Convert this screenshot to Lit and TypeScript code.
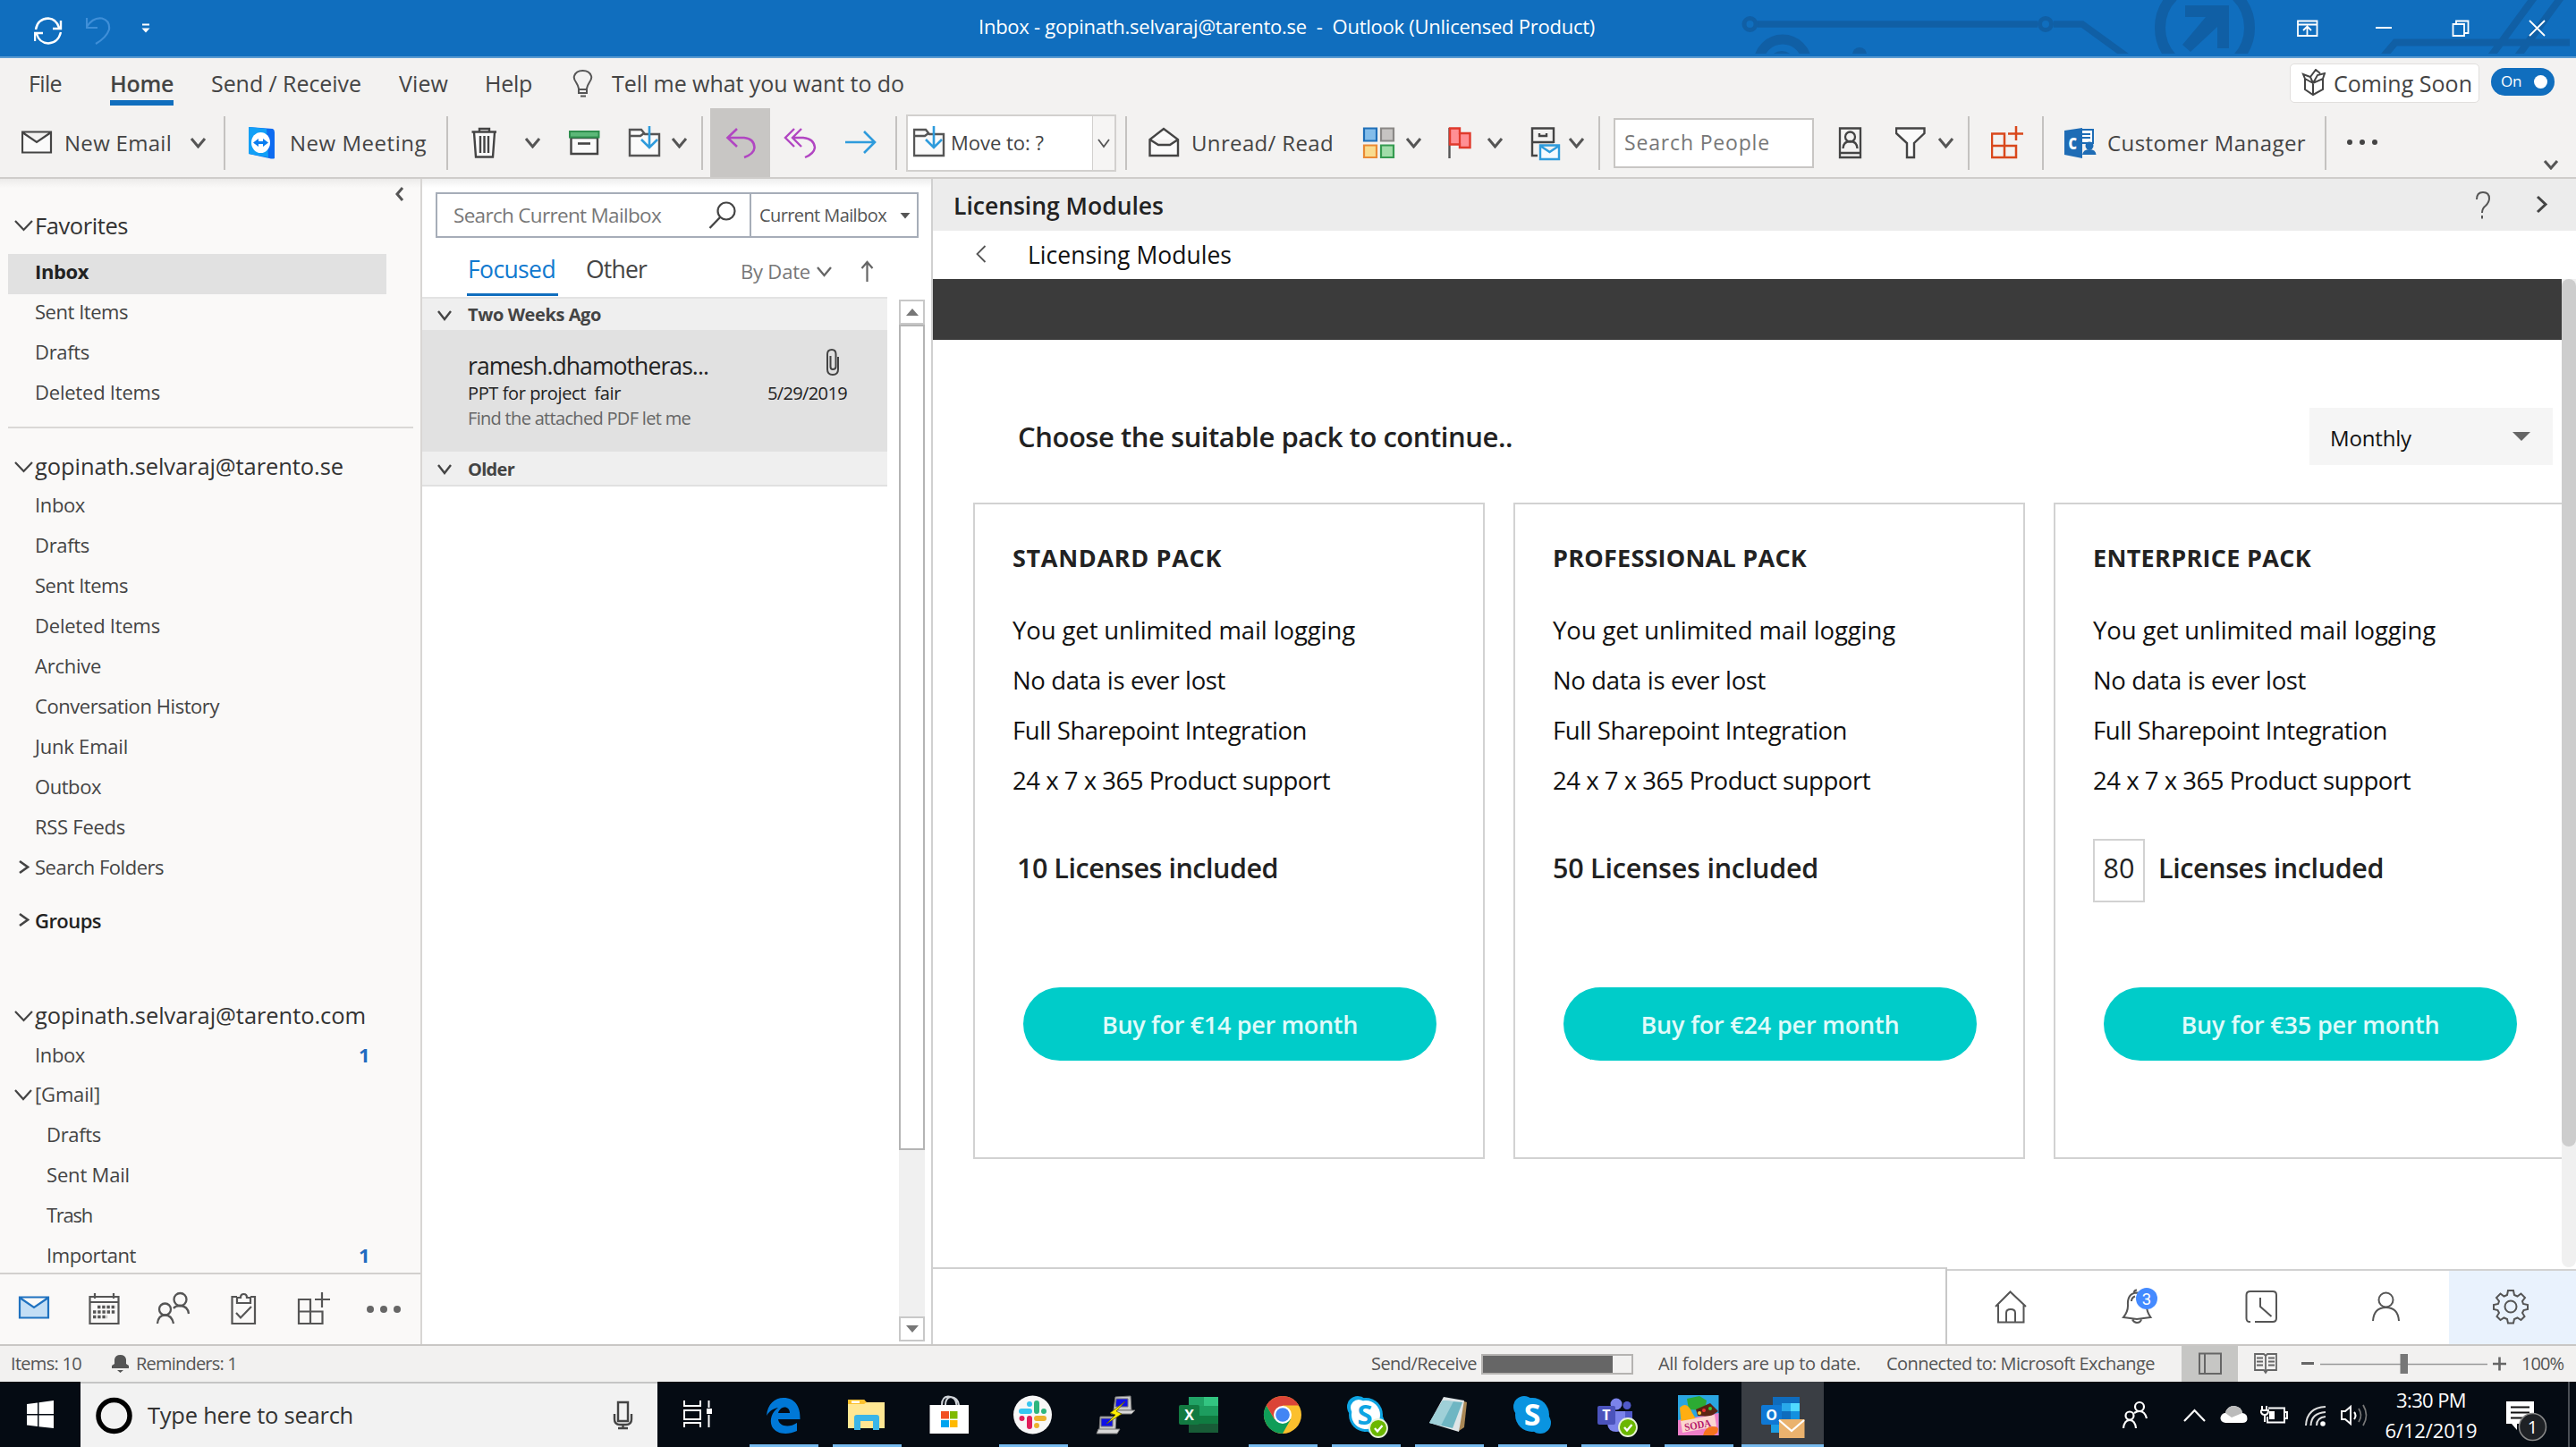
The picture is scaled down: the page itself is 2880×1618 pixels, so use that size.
import { LitElement, html, svg, css, nothing, TemplateResult } from "lit";
import { customElement, property } from "lit/decorators.js";
import { classMap } from "lit/directives/class-map.js";

type Art = ReturnType<typeof svg>;

/** A label with a fixed measure: tracking is spread evenly over its characters. */
@customElement("fit-text")
class FitText extends LitElement {
  @property({ type: Number }) w = 0;
  @property() text = "";

  static styles = css`
    :host { display: inline-block; white-space: pre; flex: none; }
    .label { display: inline-block; }
  `;

  render() {
    return html`<span class="label">${this.text}</span>`;
  }

  updated() {
    const label = this.renderRoot.querySelector<HTMLElement>(".label")!;
    label.style.letterSpacing = "0";
    const natural = label.getBoundingClientRect().width;
    label.style.letterSpacing = `${(this.w - natural) / this.text.length}px`;
    this.style.width = `${this.w}px`;
  }
}

const t = (text: string, w: number, cls = "") =>
  html`<fit-text class=${cls} .text=${text} .w=${w}></fit-text>`;

/** An icon whose artwork is drawn on the window's own coordinate grid. */
const ic = (x: number, y: number, w: number, h: number, art: Art | Art[]) =>
  html`<svg class="icon" width=${w} height=${h} viewBox="${x} ${y} ${w} ${h}">${art}</svg>`;

const down = (w: number, h: number, color = "#555", sw = 2.6) =>
  html`<svg class="icon" width=${w + 4} height=${h + 4} viewBox="-2 -2 ${w + 4} ${h + 4}">
    <path d="M0 0L${w / 2} ${h}L${w} 0" fill="none" stroke=${color} stroke-width=${sw} />
  </svg>`;
const right = (w: number, h: number, color = "#444", sw = 2.6) =>
  html`<svg class="icon" width=${w + 4} height=${h + 4} viewBox="-2 -2 ${w + 4} ${h + 4}">
    <path d="M0 0L${w} ${h / 2}L0 ${h}" fill="none" stroke=${color} stroke-width=${sw} />
  </svg>`;

const circuit = svg`<g fill="none" stroke="#105fa5">
  <path d="M1965 27H2278M2296 27H2328L2379 64" stroke-width="7.5"/>
  <circle cx="1956.500" cy="27" r="6.500" stroke-width="5"/><circle cx="2287" cy="27" r="6.500" stroke-width="5"/>
  <circle cx="1993" cy="71" r="27" stroke-width="11"/>
  <circle cx="2465" cy="31" r="50" stroke-width="12"/>
  <path d="M2834 -4L2784 64M2864 -4L2814 64M2664 64L2678 47.500H2873" stroke-width="8"/>
  <g stroke="none" fill="#105fa5"><circle cx="1992" cy="72" r="15"/><circle cx="2079" cy="61" r="8"/><path d="M2443 6H2492V54H2479V30L2449 58L2440 50L2466 19H2443Z"/></g>
</g>`;

const ribbonFolder = (x: number) => svg`<g fill="none" stroke="#555" stroke-width="2.4">
  <path d="M${x + 1} 174V145H${x + 14}L${x + 18} 150H${x + 34}V174Z" fill="#fafafa"/><path d="M${x + 1} 152H${x + 13}L${x + 17} 149"/>
  <path d="M${x + 23} 141V165M${x + 14} 156L${x + 23} 165L${x + 32} 156" stroke="#2e9bdc" stroke-width="2.600"/></g>`;

const envelope = svg`<path d="M25 147.500H57V170.500H25ZM25 148L41 159L57 148" fill="#fafafa" stroke="#444" stroke-width="2.200"/>`;
const teamviewer = svg`<path d="M278 142L305 144Q307 145 307 148V177Q305 178 301 177L278 172Z" fill="#0d6bf0"/><path d="M278 142L298 144L300 176L278 172Z" fill="#12a0f6"/><ellipse cx="291.500" cy="159.500" rx="10.500" ry="11.500" fill="#fff"/><path d="M283 159.500L289 155V158H294V155L300 159.500L294 164V161H289V164Z" fill="#0b7df0"/>`;
const trash = svg`<g fill="none" stroke="#444" stroke-width="2.400"><path d="M530 148L532 175.500H551L553 148" fill="#fafafa"/><path d="M527.500 147.500H555M536 147V144H547V147M537 152V171M541.500 152V171M546 152V171" /></g>`;
const archive = svg`<path d="M638.500 154H668V172H638.500Z" fill="#fafafa" stroke="#444" stroke-width="2.400"/><path d="M637 147H669.500V153.500H637Z" fill="#5cb878" stroke="#2f8f4e" stroke-width="2"/><path d="M646 160.500H660" stroke="#444" stroke-width="2.600"/>`;
const reply = svg`<path d="M824 144L813.500 154L824 164M814 154H832Q843 155 843.500 165Q843 172 832 176" fill="none" stroke="#b146c2" stroke-width="2.600"/>`;
const replyAll = svg`<path d="M888 144L878 154L888 164M896 144L886 154L896 164M887 154H898Q910 155 911 165Q910 172 900 176" fill="none" stroke="#b146c2" stroke-width="2.400"/>`;
const forward = svg`<path d="M945 159H977M966 147L978 159L966 171" fill="none" stroke="#2e9bdc" stroke-width="2.600"/>`;
const openMail = svg`<path d="M1285.500 174V156L1301 144L1317 156V174ZM1285.500 156L1295 162H1308L1317 156" fill="#fafafa" stroke="#444" stroke-width="2.400"/>`;
const squares = svg`<g stroke-width="2.200"><path d="M1525 143.500H1539V157.500H1525Z" fill="#83bdea" stroke="#1f6fb8"/><path d="M1544 143.500H1558V157.500H1544Z" fill="#c6c4c2" stroke="#8a8886"/><path d="M1525 162.500H1539V176H1525Z" fill="#f9dc8f" stroke="#ea8a35"/><path d="M1544 162.500H1558V176H1544Z" fill="#a1dda9" stroke="#359b50"/></g>`;
const flag = svg`<path d="M1620.500 143V177" stroke="#555" stroke-width="2.400"/><path d="M1621 143.500H1632V149H1643.500V165H1632V161.500H1621Z" fill="#ff8f94" stroke="#e03a2c" stroke-width="2.400"/><path d="M1632 149V161" stroke="#e03a2c" stroke-width="2.200"/>`;
const cabinet = svg`<g fill="none" stroke="#444" stroke-width="2.400"><path d="M1718 174H1712V143.500H1736V160M1712 159H1736M1720 149V152H1728V149"/><path d="M1721 162.500H1742V178H1721ZM1721 163L1731.500 170L1742 163" fill="#f4faff" stroke="#2e9bdc"/></g>`;
const contact = svg`<g fill="none" stroke="#444" stroke-width="2.300"><path d="M2057 143.500H2080V176H2057ZM2057 171H2080"/><circle cx="2068.500" cy="153" r="5.500"/><path d="M2060.500 166Q2061 158 2068.500 158Q2076 158 2076.500 166"/></g>`;
const funnel = svg`<path d="M2120 143.500H2151.500V149L2140 160V176H2132V160L2120 149Z" fill="#fafafa" stroke="#444" stroke-width="2.400"/>`;
const addins = svg`<path d="M2227 149.500H2241V176H2227ZM2227 163H2254V176H2241M2241 150V163M2253 163M2254 141V157M2245 149.500H2262" fill="none" stroke="#d9481c" stroke-width="2.500"/>`;
const custMgr = svg`<path d="M2322 145H2340V160H2322Z" fill="#fff" stroke="#1e6cb5" stroke-width="2"/><path d="M2328 150H2337M2328 154H2337" stroke="#1e6cb5" stroke-width="2"/><path d="M2308 146L2328 143V177L2308 173Z" fill="#1e6cb5"/><circle cx="2336" cy="163" r="4.500" fill="#1e6cb5"/><path d="M2328 173Q2329 167 2336 167Q2343 167 2343.500 173Z" fill="#1e6cb5"/><text x="2312.500" y="167" font-family="Open Sans, sans-serif" font-weight="800" font-size="18" textLength="9.500" lengthAdjust="spacingAndGlyphs" fill="#fff">C</text>`;
const dots = (x: number, y: number, step: number, r: number, c = "#444") =>
  [0, 1, 2].map((i) => svg`<circle cx=${x + i * step} cy=${y} r=${r} fill=${c} />`);

/* navigation strip */
const navMail = svg`<path d="M22 1450.500H54V1473.500H22ZM22 1451L38 1462L54 1451" fill="#c3def5" stroke="#1f72c0" stroke-width="2.200"/>`;
const navCal = svg`<g fill="none" stroke="#555" stroke-width="2.200"><path d="M100.500 1450H132.500V1480H100.500ZM100.500 1456H132.500M106 1446V1452M127 1446V1452"/><path d="M109 1461.500H130M104 1467H130M104 1472.500H120" stroke-width="3.600" stroke-dasharray="3.400 1.800"/></g>`;
const navPeople = svg`<g fill="none" stroke="#555" stroke-width="2.300"><circle cx="184.500" cy="1464" r="6.500"/><path d="M176 1480Q177 1470.500 184.500 1470.500Q192 1470.500 194 1480"/><circle cx="201.500" cy="1453" r="7"/><path d="M194 1463Q196 1460 201.500 1460Q210 1460.500 211 1469"/></g>`;
const navTask = svg`<g fill="none" stroke="#555" stroke-width="2.200"><path d="M265 1450H259.500V1480H285V1450H280M265 1457H280V1451H276Q276 1447 272.500 1447Q269 1447 269 1451H265Z"/><path d="M264 1468L269 1473.500L281 1461"/></g>`;
const navAdd = svg`<path d="M334 1453H347V1480H334ZM334 1466.500H360.500V1480H347M360.500 1466V1480M347 1466L347 1453M360 1445V1462M352 1453H369" fill="none" stroke="#555" stroke-width="2.200"/>`;

/* add-in navigation */
const home = svg`<path d="M2231 1462L2247.500 1445.500L2265 1462M2234 1460V1479.500H2262.500V1460M2243 1479V1469Q2243 1465 2248 1465Q2253 1465 2253 1469V1479" fill="none" stroke="#555" stroke-width="2"/>`;
const bell = svg`<g fill="none" stroke="#555" stroke-width="2"><path d="M2374 1473Q2379 1467 2379 1460Q2378 1446 2389 1445.500Q2400 1446 2400 1460Q2400 1467 2404.500 1473L2389 1475ZM2384 1475.500Q2386 1479 2389 1479Q2393 1479 2394 1475.500M2386 1445Q2386 1442.500 2389 1442.500M2383 1455Q2383 1451 2387 1449.500"/></g><circle cx="2400" cy="1452" r="12" fill="#448aff"/><text x="2400" y="1458.500" text-anchor="middle" font-family="Roboto, sans-serif" font-size="18.500" fill="#fff">3</text>`;
const clock = svg`<path d="M2516 1479Q2511.500 1479.500 2511.500 1475V1449Q2511.500 1445 2516 1445H2541Q2545 1445 2545 1449V1475Q2545 1479 2541 1479H2521M2527 1452V1462L2539.500 1473" fill="none" stroke="#555" stroke-width="2"/>`;
const person = svg`<g fill="none" stroke="#555" stroke-width="2"><circle cx="2667.500" cy="1454.500" r="8"/><path d="M2653 1478Q2654 1463 2667.500 1463Q2681 1463 2682 1478"/></g>`;
const gear = svg`<g fill="none" stroke="#555" stroke-width="2"><circle cx="2807" cy="1461" r="6.500"/><path d="M2804 1443H2810L2811 1448L2814.500 1449.500L2818.500 1446.500L2823 1451L2820 1455L2821 1458L2826 1459V1464L2821.500 1465L2820 1468L2822.500 1472L2818.500 1476L2814.500 1473.500L2811 1475L2810 1479.500H2804L2803 1475L2799.500 1473.500L2795.500 1476L2791.500 1472L2794 1468L2792.500 1465L2788 1464V1459L2793 1458L2794 1455L2791 1451L2795.500 1446.500L2799.500 1449.500L2803 1448Z"/></g>`;

/* taskbar */
const edge = svg`<path d="M857 1583C858 1570 866 1563 876 1563C889 1563 895 1573 894.500 1587H870C871 1595 882 1597 891 1591V1600C880 1605 868 1604 863 1595C860 1587 863 1579 870 1574C864 1575 860 1578 857 1583ZM870 1580H883C883 1572 873 1571 870 1580Z" fill="#0078d7"/>`;
const explorer = svg`<path d="M948 1565H966L968 1568H989V1597H948Z" fill="#ffe793"/><path d="M948 1565H966L969 1568L966 1570H948Z" fill="#fbc02d"/><path d="M952 1566.500H961V1569H952Z" fill="#fff"/><path d="M955 1599V1585Q955 1582 958 1582H980Q983 1582 983 1585V1599H976V1589H962V1599Z" fill="#3ab5e8"/>`;
const store = svg`<path d="M1053 1571Q1053 1562 1060 1561.500Q1069 1562 1069.500 1571M1057 1571Q1057 1563 1063 1562Q1071 1563 1072 1571" fill="none" stroke="#cfd3d8" stroke-width="2"/><path d="M1039.500 1571H1083V1603H1039.500Z" fill="#fff"/><path d="M1052 1578H1061V1586.500H1052Z" fill="#f25022"/><path d="M1062 1578H1070.500V1586.500H1062Z" fill="#7fba00"/><path d="M1052 1588H1061V1596H1052Z" fill="#00a4ef"/><path d="M1062 1588H1070.500V1596H1062Z" fill="#ffb900"/>`;
const slack = svg`<circle cx="1154.500" cy="1582" r="21.500" fill="#f7f7f7"/><g stroke-width="6" stroke-linecap="round"><path d="M1142 1578H1151M1151 1570V1570.100" stroke="#36c5f0"/><path d="M1159 1569V1578M1167 1578V1578.100" stroke="#2eb67d"/><path d="M1159 1586H1167M1159 1594V1594.100" stroke="#ecb22e"/><path d="M1151 1586V1595M1142.500 1586V1586.100" stroke="#e01e5a"/></g>`;
const putty = svg`<g stroke="#777" stroke-width="1"><path d="M1247 1562L1264 1561L1265 1577L1245 1577Z" fill="#ccc"/><path d="M1248 1564H1261V1573H1247Z" fill="#1010e8"/><path d="M1245 1577H1269L1265 1581H1242Z" fill="#d9d9d9"/><path d="M1230 1584H1248L1247 1599H1229Z" fill="#ccc"/><path d="M1231 1586H1244V1595H1231Z" fill="#1010e8"/><path d="M1228 1598H1252L1249 1603H1226Z" fill="#d9d9d9"/></g><path d="M1258 1567L1241 1580L1247 1582L1237 1592L1254 1581L1248 1578Z" fill="#ffee00" stroke="#665f00" stroke-width=".8"/>`;
const excel = svg`<path d="M1329 1562H1362V1602H1329Z" fill="#185c37"/><path d="M1329 1562H1346V1572H1329Z" fill="#21a366"/><path d="M1346 1562H1362V1572H1346Z" fill="#33c481"/><path d="M1329 1572H1362V1583H1329Z" fill="#1d9d5f"/><path d="M1329 1583H1362V1592H1329Z" fill="#107c41"/><rect x="1318" y="1571" width="23" height="22" rx="2" fill="#127a41"/><text x="1329.500" y="1588" text-anchor="middle" font-family="Open Sans, sans-serif" font-weight="700" font-size="16" fill="#fff">X</text>`;
const chrome = svg`<circle cx="1434" cy="1582" r="21" fill="#fbc02d"/><path d="M1434 1582L1415.800 1571.500A21 21 0 0 1 1452.200 1571.500H1434Z" fill="#db4437"/><path d="M1415.800 1571.500A21 21 0 0 0 1434 1603L1443 1587L1425 1587Z" fill="#0f9d58"/><path d="M1415.800 1571.500L1425 1587L1434 1572Z" fill="#db4437"/><circle cx="1434" cy="1582" r="10" fill="#fff"/><circle cx="1434" cy="1582" r="7.800" fill="#4285f4"/>`;
const check = (x: number, y: number) => svg`<circle cx=${x} cy=${y} r="10" fill="#6bb700" stroke="#e8f3da" stroke-width="1.800"/><path d="M${x - 4} ${y}L${x - 1} ${y + 3.5}L${x + 4.5} ${y - 3}" fill="none" stroke="#fff" stroke-width="2.400"/>`;
const sText = (x: number, fill: string, size: number) => svg`<text x=${x} y=${1582 + size * 0.36} text-anchor="middle" font-family="Open Sans, sans-serif" font-weight="700" font-size=${size} fill=${fill}>S</text>`;
const skypeBody = (x: number) => svg`<circle cx=${x - 9} cy="1573" r="12"/><circle cx=${x} cy="1582" r="19"/><circle cx=${x + 9} cy="1591" r="12"/>`;
const skypeBiz = svg`<g fill="#0ea5e3">${skypeBody(1527)}</g><circle cx="1527" cy="1582" r="16" fill="#fff"/><circle cx="1519" cy="1574" r="9" fill="#fff"/>${sText(1526, "#0ea5e3", 31)}${check(1541, 1597)}`;
const notepad = svg`<path d="M1634 1566L1640 1568L1637 1596L1631 1600Z" fill="#a98755"/><path d="M1614 1562L1637 1566L1631 1601L1598 1591Z" fill="#dfe5e7"/><path d="M1613 1566L1635 1568L1624 1597L1598 1591Z" fill="#6fb6c3"/><path d="M1613 1566L1625 1567L1611 1594L1598 1591Z" fill="#9fd0d8"/>`;
const skype = svg`<g fill="#0a94e0">${skypeBody(1713)}</g>${sText(1713, "#fff", 34)}`;
const teams = svg`<circle cx="1807" cy="1570" r="6.500" fill="#7b83eb"/><circle cx="1819" cy="1571.500" r="4.500" fill="#5059c9"/><path d="M1812 1578H1825V1590Q1825 1597 1818 1598H1812Z" fill="#5059c9"/><path d="M1797 1578H1817V1591Q1816 1601 1807 1601Q1798 1601 1797 1592Z" fill="#7b83eb"/><rect x="1786" y="1572" width="20" height="21" rx="2" fill="#4b53bc"/><text x="1796" y="1588" text-anchor="middle" font-family="Open Sans, sans-serif" font-weight="700" font-size="16" fill="#fff">T</text>${check(1820, 1596)}`;
const soda = svg`<path d="M1876 1560H1921.500V1605H1876Z" fill="#2aa5e0"/><path d="M1876 1588L1921.500 1580V1605H1876Z" fill="#ee7fc8"/><path d="M1886 1564L1900 1561L1908 1566L1906 1577L1888 1576Z" fill="#2cab33"/><path d="M1878 1574Q1886 1566 1892 1580L1898 1590L1880 1594Z" fill="#ffae12"/><path d="M1896 1576L1912 1569L1921 1578L1912 1584L1898 1583Z" fill="#5b2413"/><circle cx="1905" cy="1577" r="2" fill="#e33"/><circle cx="1912" cy="1575" r="2" fill="#3c3"/><circle cx="1900" cy="1580" r="2" fill="#fc3"/><path d="M1879 1589L1917 1582L1919 1595L1881 1602Z" fill="#fbd5d0"/><text x="1884" y="1600" transform="rotate(-10 1884 1600)" font-family="Liberation Serif, serif" font-weight="700" font-size="12" textLength="30" lengthAdjust="spacingAndGlyphs" fill="#b5186b">SODA</text><path d="M1904 1605Q1906 1596 1914 1595Q1921 1595 1921 1598L1920 1602L1916 1605Z" fill="#f5741d"/>`;
const outlook = svg`<path d="M1982 1562H2012V1588H1982Z" fill="#0f6cbd"/><path d="M1992 1569H2002V1578H1992ZM2002 1578H2012V1587H2002Z" fill="#1490df"/><path d="M2002 1569H2012V1578H2002Z" fill="#50d9ff"/><path d="M1992 1569H2002V1578H1992Z" fill="#28a8ea"/><path d="M1980 1588H2010V1602H1980Z" fill="#1a9de2"/><rect x="1969" y="1571" width="23" height="22" rx="2" fill="#0f78d4"/><text x="1980.500" y="1588" text-anchor="middle" font-family="Open Sans, sans-serif" font-weight="700" font-size="16" fill="#fff">O</text><path d="M1989 1587H2017.500V1608H1989Z" fill="#eab26e"/><path d="M1989 1588L2003 1600L2017 1588" fill="none" stroke="#fff" stroke-width="2.200"/>`;

interface App { x: number; art: Art; open?: boolean; active?: boolean; }
const APPS: App[] = [
  { x: 838, art: edge, open: true },
  { x: 931, art: explorer, open: true },
  { x: 1024, art: store },
  { x: 1117, art: slack, open: true },
  { x: 1210, art: putty },
  { x: 1303, art: excel },
  { x: 1396, art: chrome, open: true },
  { x: 1489, art: skypeBiz, open: true },
  { x: 1582, art: notepad, open: true },
  { x: 1675, art: skype, open: true },
  { x: 1768, art: teams, open: true },
  { x: 1861, art: soda, open: true },
  { x: 1954, art: outlook, open: true, active: true },
];

interface Folder { name: string; w: number; kind?: string; count?: string; }
const FAVORITES: Folder[] = [
  { name: "Inbox", w: 60, kind: "selected" },
  { name: "Sent Items", w: 104 },
  { name: "Drafts", w: 61 },
  { name: "Deleted Items", w: 140 },
];
const PRIMARY: Folder[] = [
  { name: "Inbox", w: 56 },
  { name: "Drafts", w: 61 },
  { name: "Sent Items", w: 104 },
  { name: "Deleted Items", w: 140 },
  { name: "Archive", w: 74 },
  { name: "Conversation History", w: 206 },
  { name: "Junk Email", w: 104 },
  { name: "Outbox", w: 74 },
  { name: "RSS Feeds", w: 101 },
  { name: "Search Folders", w: 144, kind: "closed" },
];
const SECONDARY: Folder[] = [
  { name: "Inbox", w: 56, count: "1" },
  { name: "[Gmail]", w: 73, kind: "open" },
  { name: "Drafts", w: 61, kind: "nested" },
  { name: "Sent Mail", w: 93, kind: "nested" },
  { name: "Trash", w: 51, kind: "nested" },
  { name: "Important", w: 100, kind: "nested", count: "1" },
];

const FEATURES: [string, number][] = [
  ["You get unlimited mail logging", 383],
  ["No data is ever lost", 238],
  ["Full Sharepoint Integration", 329],
  ["24 x 7 x 365 Product support", 355],
];
interface Pack { name: string; w: number; licenses: TemplateResult; first?: boolean; buy: string; bw: number; }
const PACKS: Pack[] = [
  { name: "STANDARD PACK", w: 234, first: true, licenses: t("10 Licenses included", 292, "included"), buy: "Buy for €14 per month", bw: 286 },
  { name: "PROFESSIONAL PACK", w: 284, licenses: t("50 Licenses included", 297, "included"), buy: "Buy for €24 per month", bw: 289 },
  { name: "ENTERPRICE PACK", w: 244, licenses: html`<span class="qty">${t("80", 35)}</span>${t("Licenses included", 252, "included")}`, buy: "Buy for €35 per month", bw: 289 },
];

@customElement("app-root")
class AppRoot extends LitElement {
  static styles = css`
    :host { display: flex; flex-direction: column; width: 2880px; height: 1618px; overflow: hidden; background: #fff; color: #444; font-family: "Open Sans", "Noto Sans", sans-serif; font-size: 22px; line-height: 1.3; }
    * { box-sizing: border-box; }
    .icon { display: block; flex: none; }

    .titlebar { position: relative; flex: none; height: 65px; background: #106ebe; border-bottom: 2px solid #5a9bd2; color: #fff; display: grid; grid-template-columns: 38px 58px 61px 937px 1474px 84px 86px 86px 1fr; align-items: center; }
    .titlebar .icon, .titlebar .title { position: relative; }
    .titlebar .circuit { position: absolute; left: 1900px; top: 0; }
    .title { font-size: 22px; padding-bottom: 5px; }

    .tabs { flex: none; height: 56px; background: #f3f2f1; display: grid; grid-template-columns: 32px 91px 113px 210px 96px 98px 44px 1876px 225px 1fr; align-items: center; font-size: 25px; }
    .tab-home { font-weight: 600; position: relative; }
    .tab-home::after { content: ""; position: absolute; left: 0; right: 0; bottom: -9px; height: 6px; background: #106ebe; }
    .soon { width: 212px; height: 44px; background: #fff; border: 1.500px solid #e1dfdd; border-radius: 5px; display: flex; align-items: center; gap: 9px; padding-left: 12px; }
    .toggle { width: 71px; height: 31px; margin-bottom: 3px; border-radius: 16px; background: #106ebe; color: #fff; display: flex; align-items: center; gap: 14px; padding-left: 11px; font-size: 17px; }
    .knob { width: 15px; height: 15px; border-radius: 50%; background: #fff; }

    .toolbar { flex: none; height: 79px; background: #f3f2f1; border-bottom: 2px solid #cfcdcb; display: grid; align-items: center; font-size: 24px;
      grid-template-columns: 24px 48px 140px 38px 28px 46px 175px 28px 59px 49px 66px 49px 34px 10px 82px 68px 57px 12px 245px 26px 48px 191px 48px 47px 44px 49px 42px 34px 17px 251px 64px 47px 34px 26px 57px 25px 48px 243px 25px 202px 35px; }
    .sep { width: 2px; height: 60px; background: #c4c2c0; }
    .reply { width: 67px; height: 77px; background: #c8c6c4; display: flex; align-items: center; padding-left: 17px; }
    .move { width: 235px; height: 64px; background: #fff; border: 2px solid #d2d0ce; display: flex; align-items: center; padding-left: 6px; gap: 5px; font-size: 22px; }
    .move .drop { margin-left: auto; align-self: stretch; width: 25px; border-left: 1.500px solid #d2d0ce; background: #f6f5f4; display: flex; align-items: center; justify-content: center; }
    .people { width: 224px; height: 56px; background: #fff; border: 2px solid #c8c6c4; display: flex; align-items: center; padding-left: 10px; color: #777; font-size: 23px; }
    .collapse { align-self: end; padding-bottom: 8px; justify-self: end; }

    .main { flex: none; height: 1303px; display: flex; }

    .sidebar { flex: none; width: 472px; background: #faf9f8; border-right: 2px solid #d8d6d4; display: flex; flex-direction: column; background-image: linear-gradient(#ecebea, #faf9f8 10px); }
    .tree { height: 1223px; overflow: hidden; display: flex; flex-direction: column; }
    .pin { flex: none; height: 31px; display: flex; justify-content: flex-end; align-items: center; padding: 3px 17px 0 0; }
    .row { flex: none; height: 44.950px; display: grid; grid-template-columns: 39px 1fr 70px; align-items: center; padding-bottom: 6px; }
    .row .icon { justify-self: center; margin-left: 13px; }
    .row.head { font-size: 25.500px; color: #333; padding-bottom: 2px; }
    .favorites { margin-bottom: 8px; }
    .selected { margin: 0 38px 0 9px; grid-template-columns: 30px 1fr; background: #e1e1e1; color: #222; font-weight: 700; }
    .nested { grid-template-columns: 52px 1fr 70px; }
    .count { color: #1f6cc0; font-weight: 700; padding-left: 1px; }
    .rule { flex: none; margin: 13px 8px 21.500px 9px; height: 2px; background: #dad8d6; }
    .groups { margin: 15px 0 60px; color: #222; font-weight: 600; }
    .modules { height: 80px; border-top: 2px solid #d2d0ce; display: grid; grid-template-columns: 20px 78px 76px 83px 75px 75px 50px; align-items: center; }

    .list { flex: none; width: 571px; border-right: 2px solid #d0d0d0; background-image: linear-gradient(#eeeeee, #fff 10px); display: flex; flex-direction: column; }
    .search { flex: none; margin: 15px 0 0 15px; width: 540px; height: 51px; border: 2px solid #a6adb8; background: #fff; display: grid; grid-template-columns: 18px 285px 46px 162px 1fr; align-items: center; font-size: 22.500px; color: #777; }
    .scope { border-left: 2px solid #a6adb8; height: 47px; display: flex; align-items: center; padding-left: 9px; font-size: 20px; color: #555; }
    .views { flex: none; height: 66px; display: grid; grid-template-columns: 51px 132px 173px 84px 49px 30px; font-size: 26.500px; align-items: center; padding-top: 4px; }
    .focused { color: #1179cf; position: relative; }
    .focused::after { content: ""; position: absolute; left: -1px; right: -3px; bottom: -13px; height: 3px; background: #106ebe; }
    .small { font-size: 22px; color: #777; padding-top: 4px; }
    .split { flex: 1; display: flex; }
    .mails { width: 520px; }
    .band { height: 37px; background: #efefef; border-top: 2px solid #e3e3e3; display: grid; grid-template-columns: 16px 35px 1fr; align-items: center; font-size: 20px; font-weight: 700; color: #444; padding-top: 1px; }
    .band.older { border: 0; border-bottom: 2px solid #e0e0e0; height: 39px; padding-top: 2px; }
    .mail { height: 136px; background: #e1e1e1; padding: 22px 0 0 51px; display: flex; flex-direction: column; font-size: 20px; line-height: 28px; color: #222; }
    .line { display: flex; height: 28px; align-items: center; }
    .line.from { font-size: 26.500px; height: 35px; }
    .from .icon { margin: -7px 0 0 129px; }
    .when { margin-left: 164px; }
    .preview { color: #666; }
    .bar { width: 29px; margin: 3px 0 3px 13px; background: #f0f0f0; display: flex; flex-direction: column; }
    .bar .btn { height: 28px; background: #fff; border: 2px solid #c8c8c8; display: flex; align-items: center; justify-content: center; }
    .bar .thumb { height: 923px; background: #fff; border: 2px solid #b4b4b4; margin-bottom: auto; }

    .addin { flex: none; width: 1837px; display: flex; flex-direction: column; color: #222; }
    .addin-head { flex: none; height: 58px; background: #ececec; display: grid; grid-template-columns: 23px 1701px 66px 30px; align-items: center; font-size: 26.500px; font-weight: 600; }
    .addin-head fit-text { padding-top: 2px; }
    .crumb { flex: none; height: 54px; display: grid; grid-template-columns: 46px 60px 1fr; align-items: center; font-size: 26.500px; color: #111; }
    .addin-body { flex: none; height: 1105px; display: flex; }
    .content { width: 1821px; overflow: hidden; }
    .strip { height: 68px; background: #3b3b3b; }
    .choose { height: 182px; display: flex; justify-content: space-between; align-items: center; padding: 51px 10px 17px 95px; font-size: 31px; font-weight: 600; }
    .period { width: 272px; height: 64px; background: #f5f5f5; display: flex; justify-content: space-between; align-items: center; padding: 4px 25px 0 23px; font-size: 24px; font-weight: 400; color: #111; }
    .packs { display: flex; gap: 32px; padding-left: 45px; }
    .pack { flex: none; width: 572px; height: 734px; border: 2px solid #d2d2d2; padding: 40px 0 0 42px; display: flex; flex-direction: column; }
    .pack-name { font-size: 27px; font-weight: 700; line-height: 40px; height: 73px; }
    .feature { height: 56px; display: flex; align-items: center; font-size: 27.500px; color: #111; }
    .licenses { height: 142px; display: flex; gap: 15px; font-size: 30.500px; padding-top: 3px; align-items: center; }
    .licenses.first { padding-left: 5px; }
    .included { font-weight: 600; margin-bottom: 5px; }
    .qty { width: 58px; height: 71px; border: 2px solid #d2d2d2; display: flex; justify-content: center; padding-top: 11px; }
    .buy { margin: 61px 0 0 12px; width: 462px; height: 82px; border: 0; border-radius: 41px; background: #00ccc9; color: #e0fbfa; display: flex; align-items: center; justify-content: center; font: 600 27px/1.3 "Open Sans", sans-serif; padding: 1px 0 0; }
    .vbar { width: 16px; background: #f0f0f0; border-radius: 0 0 8px 8px; }
    .vthumb { height: 970px; border-radius: 8px; background: #cdcdcd; }
    .footer { flex: none; height: 86px; display: flex; align-items: stretch; }
    .blank { width: 1134px; border-top: 2px solid #d0d0d0; border-right: 2px solid #c8c8c8; }
    .nav { flex: none; margin-top: 2px; width: 703px; border-top: 2px solid #d2d2d2; display: grid; grid-template-columns: 53px 142px 138px 142px 86px 142px; align-items: center; }
    .nav > .icon { margin-bottom: 2px; }
    .settings { align-self: stretch; background: #e9f2fd; display: flex; align-items: center; justify-content: center; padding: 0 4px 2px 0; }

    .status { flex: none; height: 42px; background: #f2f1f0; border-top: 2px solid #c9c7c5; display: grid; grid-template-columns: 12px 112px 28px 1381px 123px 198px 255px 330px 80px 54px 21px 192px 33px 61px; align-items: center; font-size: 20px; color: #555; line-height: 26px; }
    .progress { width: 170px; height: 23px; border: 2px solid #b5b3b1; background: #f2f1f0; }
    .done { height: 100%; width: 145px; background: #666; }
    .reading { width: 63px; height: 40px; background: #c6c6c4; display: flex; align-items: center; justify-content: center; }

    .taskbar { flex: none; height: 73px; background: #050b13; display: flex; color: #fff; }
    .start { width: 90px; display: flex; align-items: center; padding-left: 30px; }
    .find { width: 645px; background: #f2f2f2; border-top: 2px solid #c5c5c5; display: grid; grid-template-columns: 16px 59px 520px 30px; align-items: center; font-size: 25.500px; color: #333; }
    .taskview { width: 95px; display: flex; align-items: center; padding-left: 29px; }
    .apps { display: flex; width: 1410px; }
    .app { width: 93px; padding: 0 8px; display: flex; flex-direction: column; align-items: flex-start; }
    .app .line-open { width: 77px; height: 3px; background: #76b9ed; }
    .app .icon { height: 70px; }
    .app.active { width: 92px; margin-left: 1px; padding: 0; background: #3a3e44; }
    .app.active .line-open { width: 92px; }
    .tray { display: grid; grid-template-columns: 132px 67px 43px 45px 49px 40px 51px 122px 82px; align-items: center; }
    .clock { display: flex; flex-direction: column; align-items: center; justify-content: center; font-size: 22px; line-height: 34px; padding-right: 20px; }
    .edge-line { width: 2px; height: 73px; background: #4a4f55; }
  `;

  private folder(f: Folder) {
    const mark = f.kind === "closed" ? right(9, 13) : f.kind === "open" ? down(18, 10, "#444", 2.2) : html`<span></span>`;
    return html`<div class=${classMap({ row: true, [f.kind ?? "plain"]: true })}>
      ${mark}${t(f.name, f.w)}${f.count ? html`<span class="count">${f.count}</span>` : nothing}
    </div>`;
  }

  private account(name: string, w: number, cls = "") {
    return html`<div class="row head ${cls}">${down(19, 10, "#444", 2.2)}${t(name, w)}</div>`;
  }

  private titlebar() {
    return html`<header class="titlebar">
      <svg class="circuit" width="980" height="60" viewBox="1900 0 980 60">${circuit}</svg>
      <span></span>
      ${ic(38, 10, 34, 44, svg`<g fill="none" stroke="#fff" stroke-width="2.400"><path d="M40 33Q42 21 54 20.500Q63 21 66 31M68 23V32H59"/><path d="M68 36Q65 48 54 48.500Q44 48 41 38M39 46V37H48"/></g>`)}
      ${ic(96, 10, 32, 44, svg`<path d="M97 20V31H109M97 30Q104 19 114 20.500Q123 23 122 33Q119 42 107 49" fill="none" stroke="#3f8fd8" stroke-width="2.200"/>`)}
      ${ic(157, 10, 16, 44, svg`<path d="M159 27.500H167" stroke="#fff" stroke-width="2"/><path d="M158.500 31.500H167.500L163 36.500Z" fill="#fff"/>`)}
      ${t("Inbox - gopinath.selvaraj@tarento.se  -  Outlook (Unlicensed Product)", 689, "title")}
      ${ic(2568, 10, 26, 44, svg`<path d="M2569 23.500H2590.500V40H2569ZM2569 27.500H2590.500M2579.500 39V30M2575 34L2579.500 29.500L2584 34" fill="none" stroke="#fff" stroke-width="1.800"/>`)}
      ${ic(2652, 10, 26, 44, svg`<path d="M2656 31H2674" stroke="#fff" stroke-width="2"/>`)}
      ${ic(2738, 10, 26, 44, svg`<path d="M2742.500 27H2755V40H2742.500ZM2746 27V23.500H2759.500V37H2755" fill="none" stroke="#fff" stroke-width="1.800"/>`)}
      ${ic(2824, 10, 26, 44, svg`<path d="M2828 23L2845 40M2845 23L2828 40" stroke="#fff" stroke-width="1.800"/>`)}
    </header>`;
  }

  private tabs() {
    return html`<nav class="tabs">
      <span></span>${t("File", 37)}${t("Home", 71, "tab-home")}${t("Send / Receive", 168)}${t("View", 55)}${t("Help", 53)}
      ${ic(640, 76, 26, 36, svg`<path d="M647 100Q646 96 644 93Q641 89 642 86Q644 80 651.500 80Q659 80 661 86Q662 89 659 93Q657 96 656 100V105H647ZM647 101H656M649 108.500H655" fill="none" stroke="#555" stroke-width="2"/>`)}
      ${t("Tell me what you want to do", 327)}
      <span class="soon">
        ${ic(2572, 78, 27, 32, svg`<path d="M2576 89L2585 94L2596 89V101L2585 107L2576 101ZM2585 94V107M2576 89L2574 84L2582 87L2585 94L2590 85L2598 83L2596 89M2582 87L2588 79L2593 83" fill="none" stroke="#444" stroke-width="2"/>`)}
        ${t("Coming Soon", 155)}
      </span>
      <span class="toggle">${t("On", 23)}<span class="knob"></span></span>
    </nav>`;
  }

  private toolbar() {
    const sep = html`<span class="sep"></span>`;
    const chev = down(15, 9, "#555", 3);
    const b = (x: number, w: number, art: Art | Art[]) => ic(x, 140, w, 40, art);
    return html`<div class="toolbar">
      <span></span>${b(24, 36, envelope)}${t("New Email", 120)}${chev}
      ${sep}${b(278, 32, teamviewer)}${t("New Meeting", 153)}
      ${sep}${b(527, 30, trash)}${chev}${b(635, 36, archive)}${b(701, 38, ribbonFolder(703))}${chev}
      ${sep}<span class="reply">${b(811, 36, reply)}</span>${b(876, 38, replyAll)}${b(944, 38, forward)}
      ${sep}<span class="move">${b(1021, 37, ribbonFolder(1021))}${t("Move to: ?", 104)}<span class="drop">${down(12, 8, "#555", 1.8)}</span></span>
      ${sep}${b(1284, 36, openMail)}${t("Unread/ Read", 159)}
      ${b(1523, 38, squares)}${chev}${b(1618, 28, flag)}${chev}${b(1710, 34, cabinet)}${chev}
      ${sep}<span class="people">${t("Search People", 163)}</span>
      ${b(2055, 28, contact)}${b(2119, 34, funnel)}${chev}${sep}${b(2226, 37, addins)}
      ${sep}${b(2308, 37, custMgr)}${t("Customer Manager", 222)}
      ${sep}${b(2624, 36, dots(2627, 159, 14, 3))}
      <span class="collapse">${down(14, 8, "#555", 3)}</span>
    </div>`;
  }

  private sidebar() {
    return html`<aside class="sidebar">
      <div class="tree">
        <div class="pin">${ic(441, 208, 12, 18, svg`<path d="M450 210L444 217L450 224" fill="none" stroke="#555" stroke-width="3"/>`)}</div>
        ${this.account("Favorites", 104, "favorites")}
        ${FAVORITES.map((f) => this.folder(f))}
        <div class="rule"></div>
        ${this.account("gopinath.selvaraj@tarento.se", 345)}
        ${PRIMARY.map((f) => this.folder(f))}
        <div class="row groups">${right(9, 13)}${t("Groups", 74)}</div>
        ${this.account("gopinath.selvaraj@tarento.com", 370)}
        ${SECONDARY.map((f) => this.folder(f))}
      </div>
      <div class="modules">
        <span></span>${ic(20, 1444, 38, 40, navMail)}${ic(98, 1444, 38, 40, navCal)}${ic(174, 1444, 40, 40, navPeople)}
        ${ic(257, 1444, 32, 40, navTask)}${ic(332, 1444, 40, 40, navAdd)}${ic(407, 1444, 44, 40, dots(414, 1464, 15, 4, "#666"))}
      </div>
    </aside>`;
  }

  private list() {
    return html`<section class="list">
      <div class="search">
        <span></span>${t("Search Current Mailbox", 232)}
        ${ic(792, 222, 34, 36, svg`<circle cx="812" cy="235" r="9.500" fill="none" stroke="#444" stroke-width="2.200"/><path d="M805 242L793.500 254" stroke="#444" stroke-width="2.400"/>`)}
        <span class="scope">${t("Current Mailbox", 142)}</span>
        ${ic(1000, 222, 20, 36, svg`<path d="M1006.500 237H1017.500L1012 243.500Z" fill="#555"/>`)}
      </div>
      <div class="views">
        <span></span>${t("Focused", 98, "focused")}${t("Other", 68)}${t("By Date", 78, "small")}
        <span class="small">${down(15, 9, "#666", 2.4)}</span>
        ${ic(961, 284, 18, 34, svg`<path d="M969.500 315V293M963.500 300L969.500 293L975.500 300" fill="none" stroke="#666" stroke-width="2.200"/>`)}
      </div>
      <div class="split">
        <div class="mails">
          <div class="band"><span></span>${down(14, 9, "#444", 2.4)}${t("Two Weeks Ago", 149)}</div>
          <div class="mail">
            <div class="line from">${t("ramesh.dhamotheras...", 269)}${ic(921, 388, 20, 34, svg`<path d="M937 399V413Q937 419 931 419Q925 419 925 413V396Q925 391 930 391Q934.500 391 934.500 396V410Q934.500 413 931 413Q928.500 413 928.500 410V398" fill="none" stroke="#444" stroke-width="2"/>`)}</div>
            <div class="line">${t("PPT for project  fair", 171)}<span class="when">${t("5/29/2019", 89)}</span></div>
            <div class="line preview">${t("Find the attached PDF let me", 249)}</div>
          </div>
          <div class="band older"><span></span>${down(14, 9, "#444", 2.4)}${t("Older", 52)}</div>
        </div>
        <div class="bar">
          <div class="btn">${ic(0, 0, 14, 8, svg`<path d="M0 8H14L7 0Z" fill="#777"/>`)}</div>
          <div class="thumb"></div>
          <div class="btn">${ic(0, 0, 14, 8, svg`<path d="M0 0H14L7 8Z" fill="#777"/>`)}</div>
        </div>
      </div>
    </section>`;
  }

  private pack(p: Pack) {
    return html`<article class="pack">
      <div class="pack-name">${t(p.name, p.w)}</div>
      ${FEATURES.map(([text, w]) => html`<div class="feature">${t(text, w)}</div>`)}
      <div class=${classMap({ licenses: true, first: !!p.first })}>${p.licenses}</div>
      <button class="buy">${t(p.buy, p.bw)}</button>
    </article>`;
  }

  private addin() {
    return html`<section class="addin">
      <div class="addin-head">
        <span></span>${t("Licensing Modules", 235)}
        ${ic(2767, 212, 20, 34, svg`<path d="M2769 223Q2769 215 2776 215Q2783 215 2783 222Q2783 226 2779 230Q2775 233 2775 238M2775 241V244.500" fill="none" stroke="#555" stroke-width="2"/>`)}
        ${ic(2833, 210, 18, 36, svg`<path d="M2837 219L2846 227.500L2837 236" fill="none" stroke="#444" stroke-width="3"/>`)}
      </div>
      <div class="crumb"><span></span>${ic(1089, 266, 16, 38, svg`<path d="M1101.500 275L1092.500 284L1101.500 293" fill="none" stroke="#555" stroke-width="1.800"/>`)}${t("Licensing Modules", 228)}</div>
      <div class="addin-body">
        <div class="content">
          <div class="strip"></div>
          <div class="choose">${t("Choose the suitable pack to continue..", 553)}
            <div class="period">${t("Monthly", 91)}${ic(0, 0, 20, 14, svg`<path d="M0 0H20L10 10Z" fill="#666"/>`)}</div>
          </div>
          <div class="packs">${PACKS.map((p) => this.pack(p))}</div>
        </div>
        <div class="vbar"><div class="vthumb"></div></div>
      </div>
      <div class="footer">
        <div class="blank"></div>
        <div class="nav">
          <span></span>${ic(2230, 1442, 38, 40, home)}${ic(2372, 1440, 42, 42, bell)}${ic(2510, 1442, 38, 40, clock)}${ic(2652, 1442, 34, 40, person)}
          <div class="settings">${ic(2786, 1441, 42, 40, gear)}</div>
        </div>
      </div>
    </section>`;
  }

  private status() {
    return html`<footer class="status">
      <span></span>${t("Items: 10", 79)}
      ${ic(123, 1510, 22, 26, svg`<path d="M124 1528V1525L127 1523V1518Q128 1513 133.500 1513Q139 1513 140 1518V1523L143 1525V1528ZM130 1530H137L133.500 1533Z" fill="#555"/>`)}
      ${t("Reminders: 1", 113)}${t("Send/Receive", 118)}
      <div class="progress"><div class="done"></div></div>
      ${t("All folders are up to date.", 226)}${t("Connected to: Microsoft Exchange", 300)}
      <span class="reading">${ic(2456, 1511, 28, 26, svg`<path d="M2458 1512.500H2482V1535H2458ZM2464 1512.500V1535" fill="none" stroke="#666" stroke-width="2"/>`)}</span>
      ${ic(2519, 1511, 30, 26, svg`<path d="M2521 1513H2531L2533 1515L2535 1513H2545V1531H2535L2533 1534L2531 1531H2521ZM2533 1515V1533M2523 1517.500H2530M2523 1521.500H2530M2523 1525.500H2530M2536 1517.500H2543M2536 1521.500H2543M2536 1525.500H2543" fill="none" stroke="#666" stroke-width="1.800"/>`)}
      ${ic(2573, 1511, 16, 26, svg`<path d="M2573 1523.500H2587" stroke="#666" stroke-width="3"/>`)}
      ${ic(2594, 1511, 188, 26, svg`<path d="M2594 1524.500H2781" stroke="#999" stroke-width="1.500"/><path d="M2683.500 1513H2692V1535H2683.500Z" fill="#777"/>`)}
      ${ic(2786, 1511, 18, 26, svg`<path d="M2787 1524H2802M2794.500 1516.500V1531.500" stroke="#666" stroke-width="2.600"/>`)}
      ${t("100%", 47)}
    </footer>`;
  }

  private taskbar() {
    return html`<footer class="taskbar">
      <div class="start">${ic(30, 1566, 31, 33, svg`<path d="M30 1571L42 1569.500V1582H30ZM43.500 1569.200L60 1567V1582H43.500ZM30 1583.500H42V1596L30 1594.500ZM43.500 1583.500H60V1598L43.500 1596.200Z" fill="#fff"/>`)}</div>
      <div class="find">
        <span></span>${ic(106, 1561, 44, 44, svg`<circle cx="127.500" cy="1583" r="17.500" fill="none" stroke="#000" stroke-width="5.500"/>`)}
        ${t("Type here to search", 230)}
        ${ic(685, 1565, 24, 36, svg`<path d="M691 1568H702V1589H691ZM687 1581V1587Q687 1593 693 1593H700Q706 1593 706 1587V1581M696.500 1593V1597M691 1597H702" fill="none" stroke="#444" stroke-width="2.400"/>`)}
      </div>
      <div class="taskview">${ic(764, 1566, 33, 33, svg`<path d="M765 1567V1573H783V1567M765 1578H783V1588H765ZM765 1597V1592H783V1597M792.500 1567V1575M792.500 1583V1597" fill="none" stroke="#fff" stroke-width="2"/><path d="M790 1576H796V1582H790Z" fill="#fff"/>`)}</div>
      <div class="apps">
        ${APPS.map((a) => html`<div class=${classMap({ app: true, active: !!a.active })}>
          ${a.active ? ic(1947, 1545, 91, 70, a.art) : ic(a.x, 1545, 77, 70, a.art)}
          ${a.open ? html`<span class="line-open"></span>` : nothing}
        </div>`)}
      </div>
      <div class="tray">
        <span></span>
        ${ic(2371, 1564, 30, 36, svg`<g fill="none" stroke="#fff" stroke-width="2.200"><circle cx="2380" cy="1583" r="4.500"/><path d="M2373 1597Q2374 1588 2380 1588Q2386 1588 2387 1597"/><circle cx="2391" cy="1573" r="5"/><path d="M2385 1580Q2388 1578 2391 1578Q2397 1578 2399 1586"/></g>`)}
        ${ic(2438, 1564, 30, 36, svg`<path d="M2441 1589L2452.500 1577L2464 1589" fill="none" stroke="#fff" stroke-width="2.200"/>`)}
        ${ic(2482, 1564, 34, 36, svg`<path d="M2488 1591Q2482 1590 2482.500 1585Q2484 1580 2488 1580Q2490 1572 2498 1572Q2506 1573 2507 1580Q2513 1581 2512.500 1587Q2512 1591 2507 1591Z" fill="#fff"/><path d="M2488 1580Q2490 1572 2498 1572Q2506 1573 2507 1580L2495 1585Z" fill="#bbb"/>`)}
        ${ic(2527, 1564, 34, 36, svg`<path d="M2536 1574.500H2554V1590.500H2535V1584M2554 1579H2557V1586H2554M2529 1572V1576M2534 1572V1576M2527.500 1577H2536Q2536 1582 2532 1582Q2528 1582 2527.500 1577M2532 1582V1590" fill="none" stroke="#fff" stroke-width="2"/><path d="M2537 1578H2543V1587H2537Z" fill="#fff"/>`)}
        ${ic(2576, 1564, 30, 36, svg`<g fill="none" stroke="#ddd" stroke-width="2"><path d="M2578 1594Q2579 1574 2600 1573"/><path d="M2583.500 1594Q2584 1580 2600 1579"/><path d="M2590 1594Q2590 1585 2600 1584"/></g><circle cx="2597" cy="1592" r="2.800" fill="#fff"/>`)}
        ${ic(2616, 1564, 36, 36, svg`<path d="M2618 1578H2622L2628 1573V1592L2622 1587H2618ZM2632 1579Q2635 1582.500 2632 1587" fill="none" stroke="#fff" stroke-width="2"/><path d="M2637 1575Q2642 1582.500 2637 1590M2642 1571Q2649 1582.500 2642 1594" fill="none" stroke="#777" stroke-width="1.800"/>`)}
        <span class="clock">${t("3:30 PM", 78)}${t("6/12/2019", 103)}</span>
        ${ic(2790, 1552, 64, 60, svg`<path d="M2803 1567H2834V1592H2815V1599L2809 1592H2803Z" fill="#fff"/><path d="M2808 1573.500H2829M2808 1579.500H2829M2808 1585.500H2822" stroke="#111" stroke-width="2"/><circle cx="2832.500" cy="1595.500" r="15" fill="#1e2125" stroke="#888" stroke-width="1.500"/><text x="2832.500" y="1603" text-anchor="middle" font-family="Open Sans, sans-serif" font-size="20" fill="#fff">1</text>`)}
      </div>
      <span class="edge-line"></span>
    </footer>`;
  }

  render() {
    return html`${this.titlebar()}${this.tabs()}${this.toolbar()}
      <div class="main">${this.sidebar()}${this.list()}${this.addin()}</div>
      ${this.status()}${this.taskbar()}`;
  }
}
